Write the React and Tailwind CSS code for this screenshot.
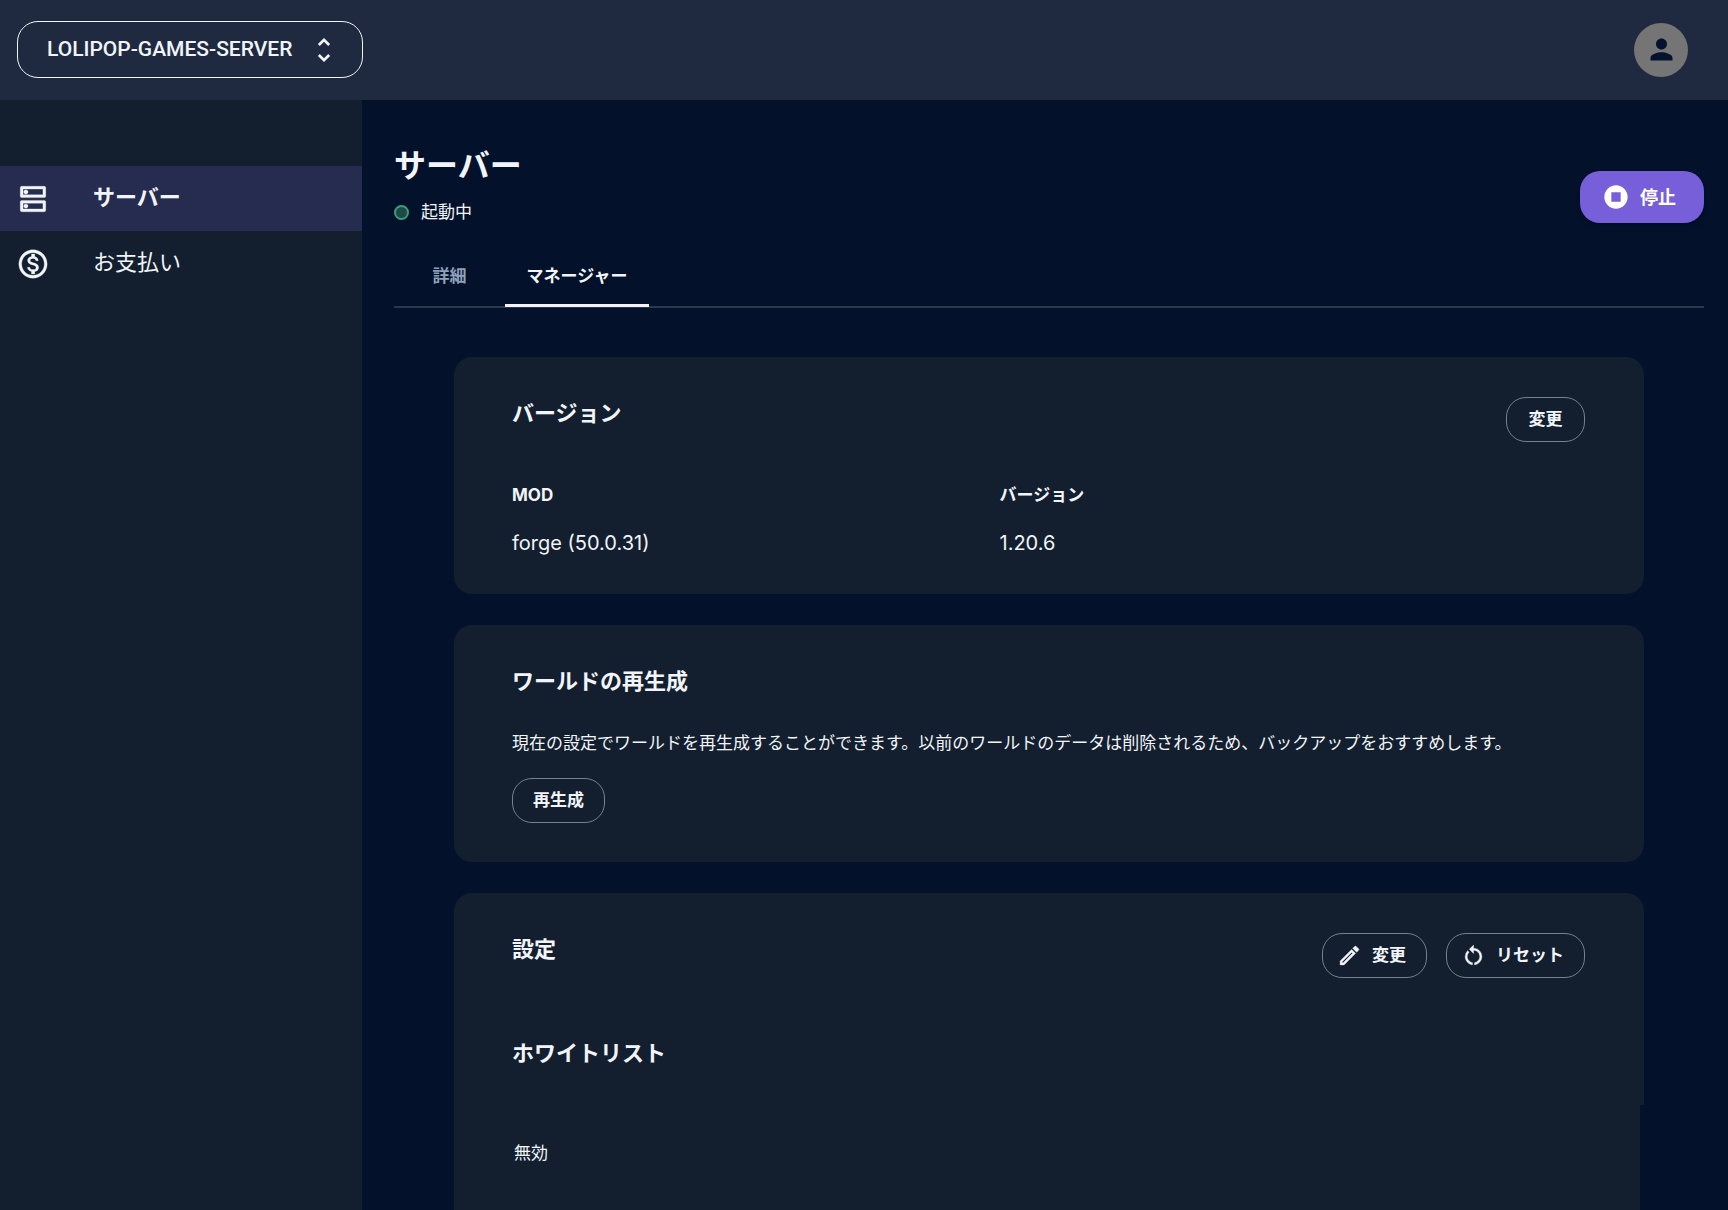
import React from "react";
import {
  MdUnfoldMore,
  MdOutlineDns,
  MdOutlineMonetizationOn,
  MdPerson,
  MdStopCircle,
  MdOutlineModeEdit,
  MdRestartAlt,
} from "react-icons/md";

function OutlineButton({ children, icon: Icon }) {
  return (
    <button
      type="button"
      className={
        Icon
          ? "flex h-[45px] items-center gap-2.5 rounded-[20px] border border-[#76808f] pr-5 pl-3.5 text-[17px] font-semibold"
          : "flex h-[45px] min-w-[79px] items-center justify-center rounded-[20px] border border-[#76808f] px-5 text-[17px] font-semibold"
      }
    >
      {Icon && <Icon size={25} strokeWidth={0.4} className="[&_[fill=none]]:stroke-none" aria-hidden="true" />}
      {children}
    </button>
  );
}

function CardTitle({ children }) {
  return <h2 className="text-[22px] leading-8 font-bold">{children}</h2>;
}

function NavItem({ icon: Icon, label, active }) {
  return (
    <a
      href="#"
      aria-current={active ? "page" : undefined}
      className={
        active
          ? "flex h-[65px] items-center gap-[43px] bg-[#262c4f] pl-4 text-[22px] font-semibold"
          : "flex h-[65px] items-center gap-[43px] pl-4 text-[22px]"
      }
    >
      <Icon size={34} strokeWidth={0.2} className="[&_[fill=none]]:stroke-none" aria-hidden="true" />
      <span className="pb-0.5">{label}</span>
    </a>
  );
}

export default function App() {
  return (
    <div className="flex h-screen flex-col overflow-hidden bg-[#03112b] font-['Inter','Noto_Sans_CJK_JP',sans-serif] text-slate-100">
      <header className="flex h-[100px] shrink-0 items-center justify-between bg-[#1f2a41] pr-10 pb-px pl-[17px]">
        <button
          type="button"
          className="flex h-[57px] w-[346px] items-center gap-4 rounded-[21px] border border-slate-100 pl-[29px] font-['Roboto',sans-serif] text-[21px] font-medium"
        >
          LOLIPOP-GAMES-SERVER
          <MdUnfoldMore size={32} aria-hidden="true" />
        </button>
        <button
          type="button"
          aria-label="アカウント"
          className="flex size-[54px] items-center justify-center rounded-full bg-[#757575] text-[#04122e]"
        >
          <MdPerson size={33} aria-hidden="true" />
        </button>
      </header>

      <div className="flex min-h-0 flex-1">
        <nav className="w-[362px] shrink-0 bg-[#131f2f] pt-[66px]">
          <NavItem icon={MdOutlineDns} label="サーバー" active />
          <NavItem icon={MdOutlineMonetizationOn} label="お支払い" />
        </nav>

        <main className="min-w-0 flex-1 overflow-hidden pt-[42px] pr-6 pl-8">
          <div className="flex items-center justify-between">
            <div>
              <h1 className="text-[32px] leading-[48px] font-bold">サーバー</h1>
              <p className="mt-2.5 flex items-center gap-3 text-[17px] leading-6">
                <span className="size-[15px] rounded-full border-2 border-[#3d9c7b] bg-[#1c4a47]" />
                起動中
              </p>
            </div>
            <button
              type="button"
              className="mt-7 flex h-[52px] items-center gap-2.5 rounded-[20px] bg-[#765fd9] pr-7 pl-[22px] text-[18px] font-semibold text-white shadow-md"
            >
              <MdStopCircle size={28} aria-hidden="true" />
              停止
            </button>
          </div>

          <div role="tablist" className="mt-4 flex border-b-2 border-[#2b374c] text-[17px] font-semibold">
            <button type="button" role="tab" aria-selected="false" className="h-[66px] w-[111px] pt-2 text-slate-400">
              詳細
            </button>
            <button type="button" role="tab" aria-selected="true" className="-mb-px h-[67px] w-36 border-b-3 border-slate-100 pt-2.5">
              マネージャー
            </button>
          </div>

          <div className="flex flex-col gap-[31px] px-[60px] pt-[49px]">
            <section className="h-[237px] rounded-[18px] bg-[#131f2f] pt-10 pr-[59px] pl-[58px]">
              <div className="flex items-start justify-between">
                <CardTitle>バージョン</CardTitle>
                <OutlineButton>変更</OutlineButton>
              </div>
              <dl className="mt-[39px] grid grid-cols-2 pr-[98px]">
                <div>
                  <dt className="text-[17px] leading-7 font-bold">MOD</dt>
                  <dd className="mt-5 text-[20px] leading-7">forge (50.0.31)</dd>
                </div>
                <div>
                  <dt className="text-[17px] leading-7 font-bold">バージョン</dt>
                  <dd className="mt-5 text-[20px] leading-7">1.20.6</dd>
                </div>
              </dl>
            </section>

            <section className="h-[237px] rounded-[18px] bg-[#131f2f] pt-10 pr-[59px] pl-[58px]">
              <CardTitle>ワールドの再生成</CardTitle>
              <p className="mt-8 mb-[21px] text-[17px] leading-7">
                現在の設定でワールドを再生成することができます。以前のワールドのデータは削除されるため、バックアップをおすすめします。
              </p>
              <OutlineButton>再生成</OutlineButton>
            </section>

            <section>
              <div className="h-[212px] rounded-t-[18px] bg-[#131f2f] pt-10 pr-[59px] pl-[58px]">
                <div className="flex items-start justify-between">
                  <CardTitle>設定</CardTitle>
                  <div className="flex gap-[19px]">
                    <OutlineButton icon={MdOutlineModeEdit}>変更</OutlineButton>
                    <OutlineButton icon={MdRestartAlt}>リセット</OutlineButton>
                  </div>
                </div>
                <div className="mt-[59px]">
                  <CardTitle>ホワイトリスト</CardTitle>
                </div>
              </div>
              <div className="mr-1 h-40 bg-[#131f2f] px-[60px] pt-8">
                <p className="text-[17px] leading-8">無効</p>
              </div>
            </section>
          </div>
        </main>
      </div>
    </div>
  );
}
